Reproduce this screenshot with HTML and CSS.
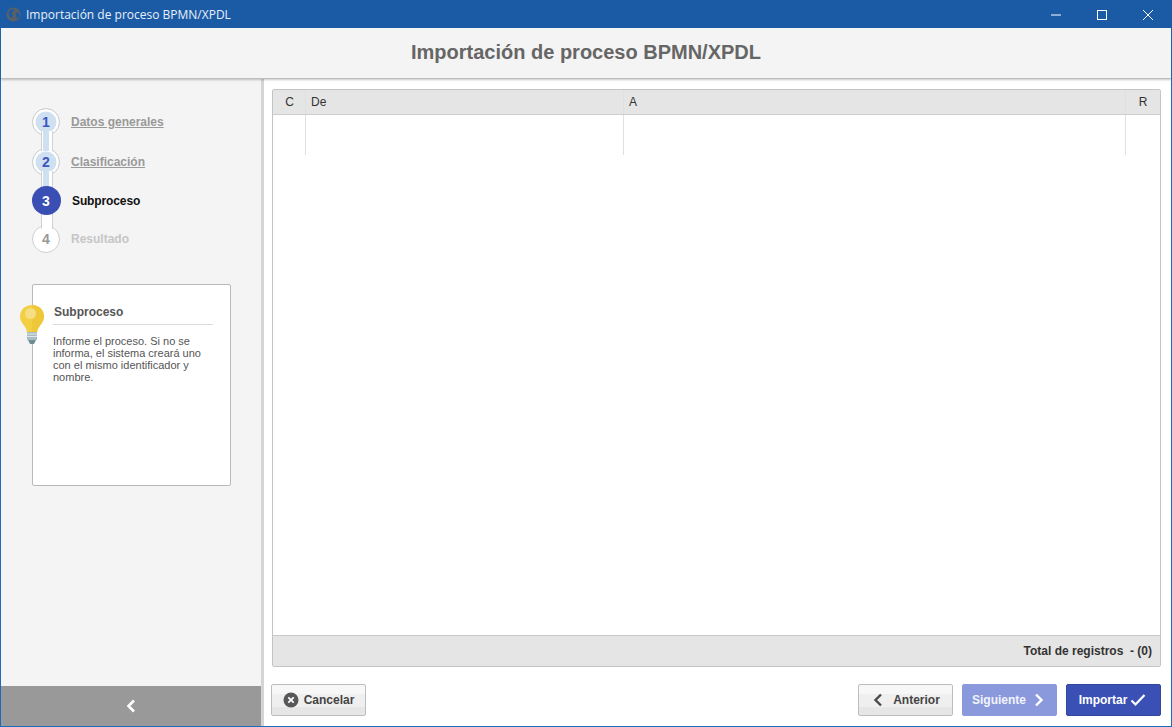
FILE: index.html
```html
<!DOCTYPE html>
<html lang="es">
<head>
<meta charset="utf-8">
<title>Importación de proceso BPMN/XPDL</title>
<link rel="stylesheet" href="styles.css">
</head>
<body>
<div class="window">
  <div class="titlebar">
    <svg class="app-icon" width="15" height="15" viewBox="0 0 15 15"><circle cx="7.5" cy="7.5" r="7" fill="#5a5f68"/><path d="M3 4c2-2 4-2 5-1.500 1 .8-1 2-2 2.500-1 .8-.5 2 .5 2.500 1 .6 0 2.500-1 3.500C3.500 10 2 7 3 4zM10 6c1.500-.5 3-.5 3.500 1 0 2-1 4-2.500 5-1-1-.5-2-.5-3-.5-1-1-2-.5-3z" fill="#1b5ba6"/></svg>
    <span class="window-title">Importación de proceso BPMN/XPDL</span>
    <div class="window-controls">
      <svg width="46" height="28" viewBox="0 0 46 28"><path d="M18 15h10" stroke="#fff" fill="none"/></svg>
      <svg width="46" height="28" viewBox="0 0 46 28"><rect x="18.500" y="10.500" width="9" height="9" stroke="#fff" fill="none"/></svg>
      <svg width="46" height="28" viewBox="0 0 46 28"><path d="M18 10l10 10M28 10l-10 10" stroke="#fff" fill="none"/></svg>
    </div>
  </div>
  <header class="page-header"><h1>Importación de proceso BPMN/XPDL</h1></header>
  <div class="body">
    <aside class="sidebar">
      <div class="sidebar-content">
        <ol class="steps">
          <li class="step done"><span class="dot">1</span><a class="step-label">Datos generales</a></li>
          <li class="step done"><span class="dot">2</span><a class="step-label">Clasificación</a></li>
          <li class="step current"><span class="dot">3</span><span class="step-label">Subproceso</span></li>
          <li class="step pending"><span class="dot">4</span><span class="step-label">Resultado</span></li>
        </ol>
        <div class="help-card">
          <svg class="bulb" width="26" height="41" viewBox="0 0 26 41">
            <path d="M13 1C6 1 1 6 1 12.500c0 4 2 6.500 4 9 1.500 2 2.500 4 3 6.500h10c.5-2.500 1.500-4.500 3-6.500 2-2.500 4-5 4-9C25 6 20 1 13 1z" fill="#f2d041"/>
            <path d="M13 1c7 0 12 5 12 11.500 0 4-2 6.500-4 9-1.500 2-2.500 4-3 6.500h-5z" fill="#eec838"/>
            <circle cx="11.500" cy="9.500" r="5.500" fill="#f6de84"/>
            <rect x="8" y="28" width="10" height="8" fill="#a9bcc2"/>
            <path d="M8 30h10M8 32.500h10" stroke="#eef2f3" stroke-width=".8"/>
            <path d="M9 36h8l-2 4h-4z" fill="#6f8d99"/>
          </svg>
          <h2>Subproceso</h2>
          <p>Informe el proceso. Si no se informa, el sistema creará uno con el mismo identificador y nombre.</p>
        </div>
      </div>
      <button class="collapse" type="button" aria-label="Contraer">
        <svg width="12" height="14" viewBox="0 0 12 14"><path d="M9 1.500 3.500 7 9 12.500" stroke="#fff" stroke-width="2.600" fill="none"/></svg>
      </button>
    </aside>
    <main class="main">
      <section class="grid">
        <div class="grid-head">
          <div class="col col-c center">C</div>
          <div class="col col-de">De</div>
          <div class="col col-a">A</div>
          <div class="col col-r center">R</div>
        </div>
        <div class="grid-row">
          <div class="col col-c"></div>
          <div class="col col-de"></div>
          <div class="col col-a"></div>
          <div class="col col-r"></div>
        </div>
        <div class="grid-space"></div>
        <div class="grid-foot">Total de registros &nbsp;- (0)</div>
      </section>
      <div class="actions">
        <button class="btn" type="button">
          <svg width="16" height="16" viewBox="0 0 16 16"><circle cx="8" cy="8" r="7.500" fill="#58585a"/><path d="M5.300 5.300l5.400 5.400M10.700 5.300l-5.400 5.400" stroke="#fff" stroke-width="1.800"/></svg>
          Cancelar
        </button>
        <div class="spacer"></div>
        <button class="btn prev" type="button">
          <svg width="10" height="14" viewBox="0 0 10 14"><path d="M8 1.500 2.500 7 8 12.500" stroke="#4a4a4a" stroke-width="2.400" fill="none"/></svg>
          <span class="prev-label">Anterior</span>
        </button>
        <button class="btn primary disabled" type="button">
          Siguiente
          <svg class="next-icon" width="10" height="14" viewBox="0 0 10 14"><path d="M2 1.500 7.500 7 2 12.500" stroke="#fff" stroke-width="2.400" fill="none"/></svg>
        </button>
        <button class="btn primary tight" type="button">
          Importar
          <svg width="16" height="14" viewBox="0 0 16 14"><path d="M1.500 7.500 5.500 11.500 14.500 2" stroke="#fff" stroke-width="2.200" fill="none"/></svg>
        </button>
      </div>
    </main>
  </div>
</div>
</body>
</html>
```
FILE: styles.css
```css
* { box-sizing: border-box; }
html, body { margin: 0; height: 100%; overflow: hidden; }
body { font-family: "Liberation Sans", Arial, sans-serif; background: #fff; color: #333; }

.window {
  width: 1172px;
  height: 727px;
  display: flex;
  flex-direction: column;
  border: 1px solid #1a6dbb;
  border-top: 0;
}

.titlebar {
  height: 28px;
  margin: 0 -1px;
  flex: none;
  display: flex;
  align-items: center;
  padding-left: 6px;
  background: #1b5ba6;
  color: #fff;
}
.app-icon { flex: none; }
.window-title { margin-left: 5px; font: 12px "Open Sans", "Noto Sans", sans-serif; color: #e8f0f8; }
.window-controls { margin-left: auto; display: flex; margin-right: 1px; }
.window-controls svg { display: block; margin-left: 0; }

.page-header {
  height: 51px;
  flex: none;
  background: #f4f4f4;
  border-bottom: 1px solid #bdbdbd;
  box-shadow: 0 1px 2px rgba(0,0,0,.22);
  display: flex;
  align-items: center;
  justify-content: center;
  position: relative;
  z-index: 4;
}
.page-header h1 { margin: 0 0 2px; font-size: 20px; font-weight: bold; color: #666; }

.body { flex: 1; min-height: 0; display: flex; }

.sidebar {
  width: 263px;
  flex: none;
  display: flex;
  flex-direction: column;
  background: #f4f4f4;
  border-right: 3px solid #d4d4d4;
}
.sidebar-content { flex: 1; padding: 23px 0 0 31px; }

.steps { list-style: none; margin: 0; padding: 0; width: 200px; }
.step { height: 39px; display: flex; align-items: center; position: relative; font-size: 12px; font-weight: bold; }
.step:nth-child(1) { height: 40px; }
.step:nth-child(4) { height: 38px; }
.step:not(:last-child)::after {
  content: "";
  position: absolute;
  left: 9px;
  top: 29px;
  width: 10px;
  height: 20px;
  background: linear-gradient(to right, #fff 1px, #cfe0f1 1px, #cfe0f1 7px, #fff 7px);
  border: solid #d2d2d2;
  border-width: 0 1px;
  z-index: 2;
}
.step.current::after { background: #fff; top: 30px; height: 18px; }
.dot {
  width: 28px;
  height: 28px;
  border-radius: 50%;
  flex: none;
  display: flex;
  align-items: center;
  justify-content: center;
  font-size: 14px;
  font-weight: bold;
  position: relative;
  z-index: 1;
}
.done .dot { background: #cfe0f1; color: #3c55c0; box-shadow: inset 0 0 0 2.500px #fff; border: 1px solid #cfcfcf; }
.current .dot { background: #3a4fb4; color: #fff; width: 29px; height: 29px; margin-left: -.5px; margin-right: -.5px; z-index: 3; }
.pending .dot { background: #fff; color: #999; border: 1px solid #cfcfcf; }
.step-label { margin-left: 11px; }
.done .step-label { color: #999; text-decoration: underline; }
.current .step-label { color: #111; margin-left: 12px; font-size: 12px; letter-spacing: -.01em; }
.pending .step-label { color: #c6c6c6; }

.help-card {
  position: relative;
  width: 199px;
  height: 202px;
  margin-top: 26px;
  padding: 20px 17px 0 20px;
  background: #fff;
  border: 1px solid #b9b9b9;
  border-radius: 2px;
}
.bulb { position: absolute; left: -14px; top: 19px; }
.help-card h2 {
  margin: 0 0 10px;
  padding: 0 0 5px 1px;
  font-size: 12px;
  line-height: 14px;
  font-weight: bold;
  color: #555;
  border-bottom: 1px solid #dcdcdc;
}
.help-card p { margin: 0; font-size: 11px; line-height: 12px; color: #555; }

.collapse {
  height: 40px;
  flex: none;
  border: 0;
  padding: 0;
  background: #999;
  display: flex;
  align-items: center;
  justify-content: center;
}

.main { flex: 1; min-width: 0; display: flex; flex-direction: column; padding: 10px 10px 10px 7px; }

.grid {
  flex: 1;
  min-height: 0;
  margin-left: 1px;
  display: flex;
  flex-direction: column;
  border: 1px solid #c4c4c4;
  border-radius: 2px;
}
.grid-head { height: 25px; flex: none; display: flex; background: #e5e5e5; border-bottom: 1px solid #cdcdcd; font-size: 12px; color: #333; }
.grid-row { height: 40px; flex: none; display: flex; }
.col { border-right: 1px solid #e0e0e0; padding-left: 5px; line-height: 25px; }
.center { text-align: center; padding-left: 0; }
.col-c { width: 33px; }
.col-c.center { padding-left: 1px; }
.col-de { width: 318px; }
.col-a { width: 502px; }
.col-r { flex: 1; border-right: 0; }
.grid-space { flex: 1; }
.grid-foot {
  height: 31px;
  flex: none;
  background: #e5e5e5;
  border-top: 1px solid #c8c8c8;
  text-align: right;
  padding-right: 8px;
  line-height: 30px;
  font-size: 12px;
  font-weight: bold;
  color: #333;
}

.actions { height: 32px; flex: none; margin-top: 17px; display: flex; gap: 9px; }
.spacer { flex: 1; }
.btn {
  width: 95px;
  height: 32px;
  display: flex;
  align-items: center;
  justify-content: center;
  gap: 5px;
  padding: 0;
  font: bold 12px "Liberation Sans", Arial, sans-serif;
  color: #444;
  border: 1px solid #bdbdbd;
  border-radius: 2px;
  background: linear-gradient(#f7f7f7 0, #f7f7f7 30%, #efefef 30%, #efefef 72%, #e6e6e6 72%, #e6e6e6 100%);
}
.prev { padding-left: 2px; }
.prev-label { margin-left: 5px; }
.next-icon { margin-left: 3px; }
.primary { color: #fff; background: #3a50b4; border-color: #34479f; }
.disabled { padding-right: 3px; background: #8a99dc; border-color: #8a99dc; color: #f1f3fb; }
.tight { gap: 3px; padding-right: 2px; }
```
